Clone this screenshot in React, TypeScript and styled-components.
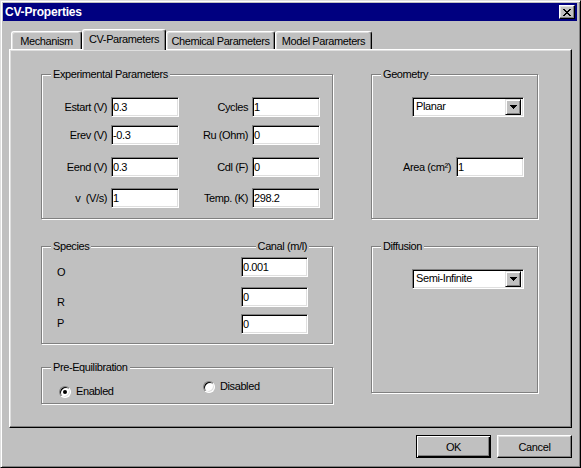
import React from "react";
import styled, { createGlobalStyle } from "styled-components";

const GlobalStyle = createGlobalStyle`
  html, body { margin: 0; padding: 0; background: #c0c0c0; }
  body {
    font-family: "Liberation Sans", Arial, sans-serif;
    font-size: 11px;
    letter-spacing: -0.4px;
    color: #000;
  }
  * { box-sizing: border-box; }
`;

const Window = styled.div`
  width: 581px;
  height: 468px;
  background: #c0c0c0;
  border: 1px solid;
  border-color: #dfdfdf #000 #000 #dfdfdf;
  box-shadow: inset 1px 1px #fff, inset -1px -1px #808080;
  padding: 2px 3px 2px 2px;
  display: flex;
  flex-direction: column;
`;

const TitleBar = styled.div`
  height: 18px;
  background: #000080;
  color: #fff;
  font-weight: bold;
  font-size: 12px;
  letter-spacing: -0.2px;
  display: flex;
  align-items: center;
  justify-content: space-between;
  padding: 0 2px;
`;

const CloseButton = styled.div`
  width: 16px;
  height: 14px;
  background: #c0c0c0;
  border: 1px solid;
  border-color: #fff #000 #000 #fff;
  box-shadow: inset -1px -1px #808080, inset 1px 1px #dfdfdf;
  display: flex;
  align-items: center;
  justify-content: center;
`;

const Body = styled.div`
  padding: 8px 5px 0 6px;
  display: flex;
  flex-direction: column;
`;

const TabStrip = styled.div`
  height: 20px;
  display: flex;
  align-items: flex-end;
  padding-left: 2px;
`;

const Tab = styled.div<{ $active?: boolean; $w: number }>`
  width: ${(p) => p.$w}px;
  height: ${(p) => (p.$active ? 21 : 18)}px;
  margin-bottom: ${(p) => (p.$active ? -1 : 0)}px;
  position: relative;
  z-index: ${(p) => (p.$active ? 2 : 0)};
  background: #c0c0c0;
  border-top: 1px solid #fff;
  border-left: 1px solid #fff;
  border-right: 1px solid #000;
  border-radius: 3px 3px 0 0;
  box-shadow: inset -1px 0 #808080, inset 1px 1px #dfdfdf;
  display: flex;
  justify-content: center;
  align-items: ${(p) => (p.$active ? "flex-start" : "center")};
  padding-top: ${(p) => (p.$active ? 3 : 1)}px;
  white-space: nowrap;
`;

const Panel = styled.div`
  height: 379px;
  position: relative;
  z-index: 1;
  border: 1px solid;
  border-color: #fff #000 #000 #fff;
  box-shadow: inset -1px -1px #808080, inset 1px 1px #dfdfdf;
  padding: 24px 0 0 31px;
  display: grid;
  grid-template-columns: 292px 167px;
  column-gap: 38px;
  align-items: start;
`;

const Column = styled.div`
  display: flex;
  flex-direction: column;
`;

const Group = styled.div<{ $h: number; $mt?: number }>`
  position: relative;
  height: ${(p) => p.$h}px;
  margin-top: ${(p) => p.$mt ?? 0}px;
  border: 1px solid #808080;
  box-shadow: inset 1px 1px #fff, 1px 1px #fff;
`;

const Legend = styled.span<{ $right?: boolean }>`
  position: absolute;
  top: -7px;
  ${(p) => (p.$right ? "right: 23px;" : "left: 9px;")}
  padding: 0 2px;
  line-height: 13px;
  background: #c0c0c0;
  white-space: nowrap;
`;

const ParamGrid = styled.div`
  padding-top: 22px;
  display: flex;
  flex-direction: column;
`;

const ParamRow = styled.div<{ $mt: number }>`
  display: grid;
  grid-template-columns: 66px 68px 67px 68px;
  grid-auto-rows: 20px;
  column-gap: 3px;
  align-items: center;
  margin-top: ${(p) => p.$mt}px;
`;

const FieldLabel = styled.span`
  text-align: right;
  white-space: pre;
  padding-right: 1px;
  line-height: 13px;
`;

const Field = styled.input<{ $w?: number }>`
  width: ${(p) => p.$w ?? 68}px;
  height: 20px;
  margin: 0;
  padding: 0 0 0 1px;
  font: inherit;
  letter-spacing: inherit;
  color: #000;
  background: #fff;
  border: 1px solid;
  border-color: #808080 #fff #fff #808080;
  box-shadow: inset 1px 1px #000, inset -1px -1px #dfdfdf;
  outline: none;
`;

const GeoBody = styled.div`
  padding: 22px 13px 0 0;
  display: flex;
  flex-direction: column;
  align-items: flex-end;
`;

const AreaRow = styled.div`
  margin-top: 40px;
  display: flex;
  align-items: center;
  gap: 4px;
`;

const Combo = styled.div`
  width: 112px;
  height: 20px;
  background: #fff;
  border: 1px solid;
  border-color: #808080 #fff #fff #808080;
  box-shadow: inset 1px 1px #000, inset -1px -1px #dfdfdf;
  padding: 1px 2px 2px 1px;
  display: flex;
  align-items: center;
  justify-content: space-between;
`;

const ComboText = styled.span`
  padding-left: 2px;
  line-height: 13px;
`;

const ComboButton = styled.div`
  width: 16px;
  height: 16px;
  background: #c0c0c0;
  border: 1px solid;
  border-color: #dfdfdf #000 #000 #dfdfdf;
  box-shadow: inset 1px 1px #fff, inset -1px -1px #808080;
  display: flex;
  align-items: center;
  justify-content: center;
`;

const SpeciesBody = styled.div`
  padding: 10px 0 0 15px;
  display: flex;
  flex-direction: column;
`;

const SpeciesRow = styled.div<{ $mt: number }>`
  display: grid;
  grid-template-columns: 184px 67px;
  grid-auto-rows: 20px;
  align-items: start;
  margin-top: ${(p) => p.$mt}px;
`;

const SpeciesLabel = styled.span<{ $mt: number }>`
  margin-top: ${(p) => p.$mt}px;
  line-height: 13px;
`;

const RadioRow = styled.div`
  display: flex;
  align-items: flex-start;
`;

const RadioItem = styled.label<{ $mt: number; $ml: number; $w?: number }>`
  display: flex;
  align-items: center;
  gap: 5px;
  margin-top: ${(p) => p.$mt}px;
  margin-left: ${(p) => p.$ml}px;
  width: ${(p) => (p.$w ? `${p.$w}px` : "auto")};
  line-height: 13px;
`;

const RadioCircle = styled.span<{ $checked?: boolean }>`
  position: relative;
  flex: none;
  width: 12px;
  height: 12px;
  border-radius: 50%;
  background: #fff;
  border: 1px solid;
  border-color: #808080 #fff #fff #808080;
  box-shadow: inset 1px 1px #000, inset -1px -1px #dfdfdf;
  &::after {
    content: "";
    display: ${(p) => (p.$checked ? "block" : "none")};
    position: absolute;
    left: 3px;
    top: 3px;
    width: 4px;
    height: 4px;
    border-radius: 50%;
    background: #000;
  }
`;

const ComboInGroup = styled.div`
  padding: 22px 0 0 40px;
`;

const ButtonRow = styled.div`
  margin-top: 7px;
  display: flex;
  justify-content: flex-end;
  gap: 6px;
`;

const DialogButton = styled.button<{ $default?: boolean }>`
  width: 75px;
  height: 23px;
  margin: 0;
  padding: 0;
  font: inherit;
  letter-spacing: inherit;
  color: #000;
  background: #c0c0c0;
  border: 1px solid;
  border-color: ${(p) => (p.$default ? "#000" : "#fff #000 #000 #fff")};
  box-shadow: ${(p) =>
    p.$default
      ? "inset 1px 1px #fff, inset -1px -1px #000, inset -2px -2px #808080"
      : "inset -1px -1px #808080, inset 1px 1px #dfdfdf"};
`;

const CloseGlyph = () => (
  <svg width="8" height="7" viewBox="0 0 8 7" shapeRendering="crispEdges">
    <path
      d="M0 0h2v1h-2z M6 0h2v1h-2z M1 1h2v1h-2z M5 1h2v1h-2z M2 2h4v1h-4z M3 3h2v1h-2z M2 4h4v1h-4z M1 5h2v1h-2z M5 5h2v1h-2z M0 6h2v1h-2z M6 6h2v1h-2z"
      fill="#000"
    />
  </svg>
);

const DownArrow = () => (
  <svg width="7" height="4" viewBox="0 0 7 4" shapeRendering="crispEdges">
    <path d="M0 0h7v1h-7z M1 1h5v1h-5z M2 2h3v1h-3z M3 3h1v1h-1z" fill="#000" />
  </svg>
);

const SelectBox = ({ value }: { value: string }) => (
  <Combo>
    <ComboText>{value}</ComboText>
    <ComboButton>
      <DownArrow />
    </ComboButton>
  </Combo>
);

const params: [string, string, string, string, number][] = [
  ["Estart (V)", "0.3", "Cycles", "1", 0],
  ["Erev (V)", "-0.3", "Ru (Ohm)", "0", 8],
  ["Eend (V)", "0.3", "Cdl (F)", "0", 12],
  ["v  (V/s)", "1", "Temp. (K)", "298.2", 11],
];

const species: [string, string, number, number][] = [
  ["O", "0.001", 0, 9],
  ["R", "0", 10, 9],
  ["P", "0", 7, 3],
];

export default function App() {
  return (
    <>
      <GlobalStyle />
      <Window>
        <TitleBar>
          <span>CV-Properties</span>
          <CloseButton>
            <CloseGlyph />
          </CloseButton>
        </TitleBar>
        <Body>
          <TabStrip>
            <Tab $w={71}>Mechanism</Tab>
            <Tab $w={84} $active>
              CV-Parameters
            </Tab>
            <Tab $w={109}>Chemical Parameters</Tab>
            <Tab $w={97}>Model Parameters</Tab>
          </TabStrip>
          <Panel>
            <Column>
              <Group $h={145}>
                <Legend>Experimental Parameters</Legend>
                <ParamGrid>
                  {params.map(([l1, v1, l2, v2, mt]) => (
                    <ParamRow key={l1} $mt={mt}>
                      <FieldLabel>{l1}</FieldLabel>
                      <Field defaultValue={v1} />
                      <FieldLabel>{l2}</FieldLabel>
                      <Field defaultValue={v2} />
                    </ParamRow>
                  ))}
                </ParamGrid>
              </Group>
              <Group $h={98} $mt={27}>
                <Legend>Species</Legend>
                <Legend $right>Canal (m/l)</Legend>
                <SpeciesBody>
                  {species.map(([l, v, mt, lmt]) => (
                    <SpeciesRow key={l} $mt={mt}>
                      <SpeciesLabel $mt={lmt}>{l}</SpeciesLabel>
                      <Field $w={67} defaultValue={v} />
                    </SpeciesRow>
                  ))}
                </SpeciesBody>
              </Group>
              <Group $h={37} $mt={23}>
                <Legend>Pre-Equilibration</Legend>
                <RadioRow>
                  <RadioItem $mt={17} $ml={17} $w={144}>
                    <RadioCircle $checked />
                    Enabled
                  </RadioItem>
                  <RadioItem $mt={12} $ml={0}>
                    <RadioCircle />
                    Disabled
                  </RadioItem>
                </RadioRow>
              </Group>
            </Column>
            <Column>
              <Group $h={145}>
                <Legend>Geometry</Legend>
                <GeoBody>
                  <SelectBox value="Planar" />
                  <AreaRow>
                    <FieldLabel>Area (cm²)</FieldLabel>
                    <Field defaultValue="1" />
                  </AreaRow>
                </GeoBody>
              </Group>
              <Group $h={147} $mt={27}>
                <Legend>Diffusion</Legend>
                <ComboInGroup>
                  <SelectBox value="Semi-Infinite" />
                </ComboInGroup>
              </Group>
            </Column>
          </Panel>
          <ButtonRow>
            <DialogButton $default>OK</DialogButton>
            <DialogButton>Cancel</DialogButton>
          </ButtonRow>
        </Body>
      </Window>
    </>
  );
}
